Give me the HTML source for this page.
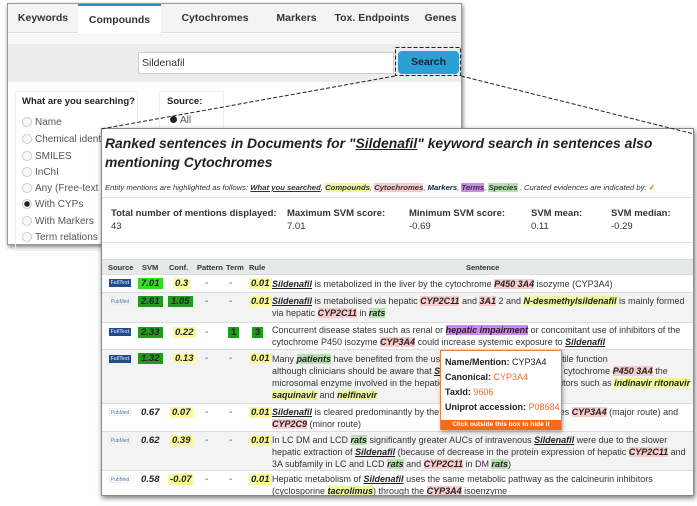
<!DOCTYPE html>
<html><head><meta charset="utf-8"><style>
*{margin:0;padding:0;box-sizing:border-box}
body{width:697px;height:506px;background:#fff;font-family:"Liberation Sans",Arial,sans-serif;position:relative;overflow:hidden;color:#222}
.abs{position:absolute}
#back{left:7px;top:3px;width:455px;height:242px;background:#fff;border:1px solid #999;box-shadow:1px 2px 4px rgba(0,0,0,.5)}
.tab{position:absolute;top:0;height:29px;font-size:10.5px;font-weight:bold;color:#333;line-height:29px;text-align:center}
.radio{position:absolute;left:14px;font-size:10px;color:#555}
.radio i{display:inline-block;width:10px;height:10px;border:1px solid #ccc;border-radius:50%;vertical-align:-2px;margin-right:3px;background:#fafafa}
#front{left:101px;top:128px;width:593px;height:368px;background:#fff;border:1px solid #888;box-shadow:1px 2px 5px rgba(0,0,0,.55);overflow:hidden}
.title{position:absolute;left:3px;font-size:13.9px;font-weight:bold;font-style:italic;color:#222;white-space:nowrap}
.leg{position:absolute;left:3px;top:54px;font-size:7.7px;font-style:italic;white-space:nowrap;color:#333}
.leg b{font-weight:bold}
.st{position:absolute;font-size:9.5px;white-space:nowrap;color:#333}
.st b{display:block;font-weight:bold;margin-bottom:2px}
.row{position:absolute;left:0;width:593px;border-top:1px solid #ddd}
.c{position:absolute;font-size:9.5px;font-weight:bold;font-style:italic;top:3px}
.s{position:absolute;left:170px;top:2px;font-size:9px;line-height:12px;white-space:nowrap;color:#333}
.kw{font-weight:bold;font-style:italic;text-decoration:underline;color:#222}
.cp{font-weight:bold;font-style:italic;background:#eef89a;color:#222}
.cy{font-weight:bold;font-style:italic;background:#f8cccc;color:#222}
.sp{font-weight:bold;font-style:italic;background:#b6e2b0;color:#222}
.tm{font-weight:bold;font-style:italic;background:#cc88ee;color:#222}
.g1{background:#33dd22;padding:0 3px}
.g2{background:#1f9a1f;padding:0 3px}
.y{background:#fafa99;padding:0 2px}
.ft{position:absolute;left:7px;top:4px;width:22px;height:8px;background:#234a8a;color:#bcd;font-size:5px;line-height:8px;text-align:center;font-weight:bold}
.pm{position:absolute;left:7px;top:4px;width:22px;height:8px;font-size:5px;line-height:8px;color:#57a;text-align:center;border:1px solid #eee}
.dash{position:absolute;font-size:10px;color:#555}
</style></head><body>

<div id="back" class="abs">
  <div class="abs" style="left:0;top:0;width:453px;height:29px;background:#f4f4f4;border-bottom:1px solid #ddd"></div>
  <div class="tab" style="left:0;width:70px">Keywords</div>
  <div class="tab" style="left:70px;width:83px;background:#fff;border-top:2px solid #2a8fc0;height:30px">Compounds</div>
  <div class="tab" style="left:153px;width:108px">Cytochromes</div>
  <div class="tab" style="left:255px;width:67px">Markers</div>
  <div class="tab" style="left:318px;width:92px">Tox. Endpoints</div>
  <div class="tab" style="left:410px;width:45px">Genes</div>
  <div class="abs" style="left:0;top:30px;width:453px;height:10px;background:#f7f7f7"></div>
  <div class="abs" style="left:0;top:40px;width:453px;height:38px;background:#ececec"></div>
  <div class="abs" style="left:130px;top:48px;width:256px;height:22px;background:#fff;border:1px solid #ccc;font-size:10.5px;line-height:20px;padding-left:3px;color:#333">Sildenafil</div>
  <div class="abs" style="left:390px;top:47px;width:61px;height:23px;background:#2aa0d4;border-radius:4px;color:#123;font-size:10.5px;font-weight:bold;line-height:23px;text-align:center">Search</div>
  <div class="abs" style="left:7px;top:87px;width:123px;height:160px;border:1px solid #eee"></div>
  <div class="abs" style="left:151px;top:87px;width:65px;height:40px;border:1px solid #eee"></div>
  <div class="abs" style="left:14px;top:92px;font-size:9.5px;font-weight:bold;color:#222">What are you searching?</div>
  <div class="abs" style="left:159px;top:92px;font-size:9.5px;font-weight:bold;color:#222">Source:</div>
  <div class="abs" style="left:162px;top:111px;font-size:10px;color:#555"><span style="display:inline-block;width:7px;height:7px;border-radius:50%;background:#222;margin-right:3px"></span>All</div>
  <div class="radio" style="top:113px"><i></i>Name</div>
  <div class="radio" style="top:130px"><i></i>Chemical identifier</div>
  <div class="radio" style="top:147px"><i></i>SMILES</div>
  <div class="radio" style="top:163px"><i></i>InChI</div>
  <div class="radio" style="top:179px"><i></i>Any (Free-text search)</div>
  <div class="radio" style="top:195px"><i style="background:radial-gradient(#222 0 2.5px,#fff 3px)"></i>With CYPs</div>
  <div class="radio" style="top:212px"><i></i>With Markers</div>
  <div class="radio" style="top:228px"><i></i>Term relations</div>
</div>

<div id="front" class="abs">
  <div class="title" style="top:6px">Ranked sentences in Documents for "<u>Sildenafil</u>" keyword search in sentences also</div>
  <div class="title" style="top:25px">mentioning Cytochromes</div>
  <div class="leg">Entity mentions are highlighted as follows: <b><u>What you searched</u></b>, <b style="background:#eef89a">Compounds</b>, <b style="background:#f8cccc">Cytochromes</b>, <b style="color:#124">Markers</b>, <b style="background:#cc88ee">Terms</b>, <b style="background:#b6e2b0">Species</b> . Curated evidences are indicated by: <span style="color:#e05010;font-style:normal;font-weight:bold">✓</span></div>
  <div class="abs" style="left:0;top:68px;width:593px;border-top:1px solid #e4e4e4"></div>
  <div class="st" style="left:9px;top:79px"><b>Total number of mentions displayed:</b>43</div>
  <div class="st" style="left:185px;top:79px"><b>Maximum SVM score:</b>7.01</div>
  <div class="st" style="left:307px;top:79px"><b>Minimum SVM score:</b>-0.69</div>
  <div class="st" style="left:429px;top:79px"><b>SVM mean:</b>0.11</div>
  <div class="st" style="left:509px;top:79px"><b>SVM median:</b>-0.29</div>
  <div class="abs" style="left:0;top:113px;width:593px;border-top:1px solid #e4e4e4"></div>

  <div class="row" style="top:130px;height:15px;background:#e5e9e8;font-size:7.5px;font-weight:bold;color:#333">
    <span class="abs" style="left:6px;top:3px">Source</span><span class="abs" style="left:40px;top:3px">SVM</span><span class="abs" style="left:67px;top:3px">Conf.</span><span class="abs" style="left:95px;top:3px">Pattern</span><span class="abs" style="left:124px;top:3px">Term</span><span class="abs" style="left:147px;top:3px">Rule</span><span class="abs" style="left:364px;top:3px">Sentence</span>
  </div>
  <div class="row" style="top:145px;height:18px;background:#fff">
    <div class="ft">FullText</div><span class="c g1" style="left:36px">7.01</span><span class="c y" style="left:71px">0.3</span><span class="dash" style="left:103px;top:3px">-</span><span class="dash" style="left:127px;top:3px">-</span><span class="c y" style="left:147px">0.01</span>
    <div class="s" style="top:3px"><span class="kw">Sildenafil</span> is metabolized in the liver by the cytochrome <span class="cy">P450 3A4</span> isozyme (CYP3A4)</div>
  </div>
  <div class="row" style="top:163px;height:30px;background:#f3f3f3">
    <div class="pm">PubMed</div><span class="c g2" style="left:36px">2.61</span><span class="c g2" style="left:66px">1.05</span><span class="dash" style="left:103px;top:3px">-</span><span class="dash" style="left:127px;top:3px">-</span><span class="c y" style="left:147px">0.01</span>
    <div class="s"><span class="kw">Sildenafil</span> is metabolised via hepatic <span class="cy">CYP2C11</span> and <span class="cy">3A1</span> 2 and <span class="cp">N-desmethylsildenafil</span> is mainly formed<br>via hepatic <span class="cy">CYP2C11</span> in <span class="sp">rats</span></div>
  </div>
  <div class="row" style="top:193px;height:27px;background:#fff">
    <div class="ft" style="top:5px">FullText</div><span class="c g2" style="left:36px;top:4px">2.33</span><span class="c y" style="left:71px;top:4px">0.22</span><span class="dash" style="left:103px;top:4px">-</span><span class="c g2" style="left:126px;top:4px;font-style:normal">1</span><span class="c g2" style="left:150px;top:4px;font-style:normal">3</span>
    <div class="s" style="top:1px"><span>Concurrent disease states such as renal or </span><span class="tm">hepatic impairment</span> or concomitant use of inhibitors of the<br>cytochrome P450 isozyme <span class="cy">CYP3A4</span> could increase systemic exposure to <span class="kw">Sildenafil</span></div>
  </div>
  <div class="row" style="top:220px;height:54px;background:#f3f3f3">
    <div class="ft" style="top:5px">FullText</div><span class="c g2" style="left:36px">1.32</span><span class="c y" style="left:71px">0.13</span><span class="dash" style="left:103px;top:3px">-</span><span class="dash" style="left:127px;top:3px">-</span><span class="c y" style="left:147px">0.01</span>
    <div class="s" style="top:3px">Many <span class="sp">patients</span> have benefited from the use of <span class="kw">Sildenafil</span> to improve erectile function<br>although clinicians should be aware that <span class="kw">Sildenafil</span> is metabolized by the cytochrome <span class="cy">P450 3A4</span> the<br>microsomal enzyme involved in the hepatic metabolism of protease inhibitors such as <span class="cp">indinavir ritonavir</span><br><span class="cp">saquinavir</span> and <span class="cp">nelfinavir</span></div>
  </div>
  <div class="row" style="top:274px;height:28px;background:#fff">
    <div class="pm">PubMed</div><span class="c" style="left:39px">0.67</span><span class="c y" style="left:68px">0.07</span><span class="dash" style="left:103px;top:3px">-</span><span class="dash" style="left:127px;top:3px">-</span><span class="c y" style="left:147px">0.01</span>
    <div class="s" style="top:2px"><span class="kw">Sildenafil</span> is cleared predominantly by the hepatic microsomal isoenzymes <span class="cy">CYP3A4</span> (major route) and<br><span class="cy">CYP2C9</span> (minor route)</div>
  </div>
  <div class="row" style="top:302px;height:39px;background:#f3f3f3">
    <div class="pm">PubMed</div><span class="c" style="left:39px">0.62</span><span class="c y" style="left:68px">0.39</span><span class="dash" style="left:103px;top:3px">-</span><span class="dash" style="left:127px;top:3px">-</span><span class="c y" style="left:147px">0.01</span>
    <div class="s" style="top:2px">In LC DM and LCD <span class="sp">rats</span> significantly greater AUCs of intravenous <span class="kw">Sildenafil</span> were due to the slower<br>hepatic extraction of <span class="kw">Sildenafil</span> (because of decrease in the protein expression of hepatic <span class="cy">CYP2C11</span> and<br>3A subfamily in LC and LCD <span class="sp">rats</span> and <span class="cy">CYP2C11</span> in DM <span class="sp">rats</span>)</div>
  </div>
  <div class="row" style="top:341px;height:27px;background:#fff">
    <div class="pm">PubMed</div><span class="c" style="left:39px">0.58</span><span class="c y" style="left:66px">-0.07</span><span class="dash" style="left:103px;top:3px">-</span><span class="dash" style="left:127px;top:3px">-</span><span class="c y" style="left:147px">0.01</span>
    <div class="s" style="top:2px">Hepatic metabolism of <span class="kw">Sildenafil</span> uses the same metabolic pathway as the calcineurin inhibitors<br>(cyclosporine <span class="cp">tacrolimus</span>) through the <span class="cy">CYP3A4</span> isoenzyme</div>
  </div>
</div>

<div class="abs" style="left:440px;top:350px;width:122px;height:80px;background:#fff;border:1px solid #f08040;box-shadow:1px 2px 4px rgba(0,0,0,.35);font-size:9px;color:#222">
  <div class="abs" style="left:4px;top:6px;white-space:nowrap"><b>Name/Mention:</b> CYP3A4</div>
  <div class="abs" style="left:4px;top:21px;white-space:nowrap"><b>Canonical:</b> <span style="color:#f06a30">CYP3A4</span></div>
  <div class="abs" style="left:4px;top:36px;white-space:nowrap"><b>TaxId:</b> <span style="color:#f06a30">9606</span></div>
  <div class="abs" style="left:4px;top:51px;white-space:nowrap"><b>Uniprot accession:</b> <span style="color:#f06a30">P08684</span></div>
  <div class="abs" style="left:0;top:69px;width:120px;height:10px;background:#f26b1d;color:#fff;font-size:6.6px;font-weight:bold;text-align:center;line-height:10px">Click outside this box to hide it</div>
</div>

<svg class="abs" style="left:0;top:0" width="697" height="506">
  <g fill="none" stroke="#222" stroke-width="1" stroke-dasharray="4,2">
    <rect x="395.5" y="47.5" width="65" height="28"/>
    <line x1="395" y1="76" x2="101" y2="129"/>
    <line x1="461" y1="76" x2="694" y2="134"/>
  </g>
</svg>
</body></html>
